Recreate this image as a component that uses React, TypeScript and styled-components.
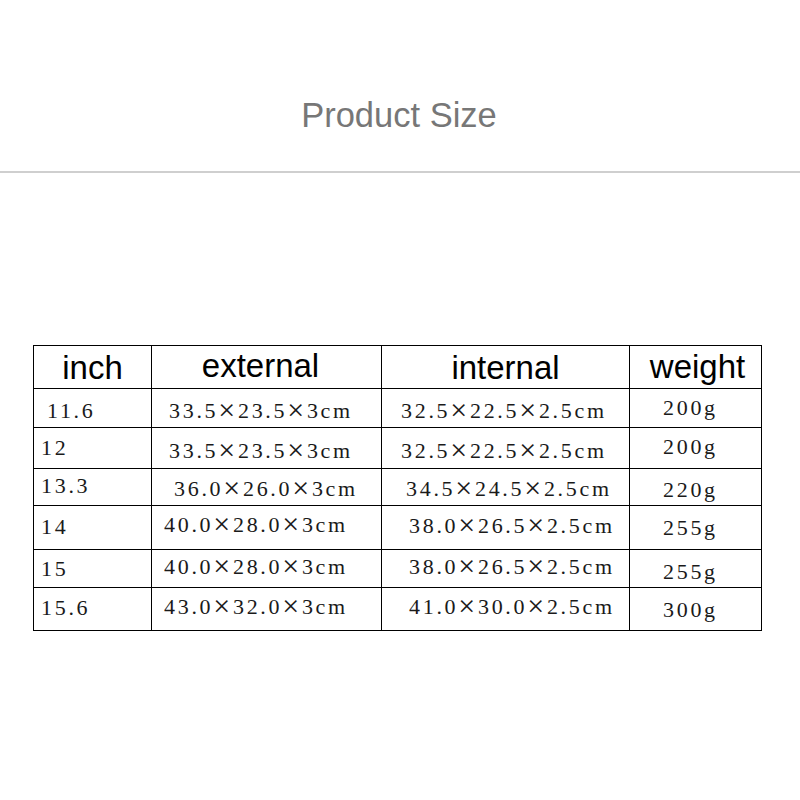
import { Fragment } from 'react';
import styled, { createGlobalStyle } from 'styled-components';

const GlobalStyle = createGlobalStyle`
    html, body {
        margin: 0;
        padding: 0;
        background: #ffffff;
    }
`;

interface ICell {
    text: string;
    indent: number;
    dy?: number;
}

interface IRow {
    height: number;
    cells: ICell[];
}

const columns = [118, 230, 248, 132];

const headers: ICell[] = [
    { text: 'inch', indent: 0, dy: 0 },
    { text: 'external', indent: -6, dy: -2 },
    { text: 'internal', indent: 0, dy: 0 },
    { text: 'weight', indent: 2, dy: -1 },
];

const rows: IRow[] = [
    {
        height: 39,
        cells: [
            { text: '11.6', indent: 13, dy: 3 },
            { text: '33.5×23.5×3cm', indent: 17, dy: 3 },
            { text: '32.5×22.5×2.5cm', indent: 19, dy: 3 },
            { text: '200g', indent: 33, dy: 0 },
        ],
    },
    {
        height: 41,
        cells: [
            { text: '12', indent: 7, dy: 0 },
            { text: '33.5×23.5×3cm', indent: 17, dy: 3 },
            { text: '32.5×22.5×2.5cm', indent: 19, dy: 3 },
            { text: '200g', indent: 33, dy: -1 },
        ],
    },
    {
        height: 37,
        cells: [
            { text: '13.3', indent: 7, dy: -1 },
            { text: '36.0×26.0×3cm', indent: 22, dy: 2 },
            { text: '34.5×24.5×2.5cm', indent: 24, dy: 2 },
            { text: '220g', indent: 33, dy: 3 },
        ],
    },
    {
        height: 44,
        cells: [
            { text: '14', indent: 7, dy: -1 },
            { text: '40.0×28.0×3cm', indent: 12, dy: -3 },
            { text: '38.0×26.5×2.5cm', indent: 27, dy: -2 },
            { text: '255g', indent: 33, dy: 0 },
        ],
    },
    {
        height: 38,
        cells: [
            { text: '15', indent: 7, dy: 0 },
            { text: '40.0×28.0×3cm', indent: 12, dy: -2 },
            { text: '38.0×26.5×2.5cm', indent: 27, dy: -2 },
            { text: '255g', indent: 33, dy: 3 },
        ],
    },
    {
        height: 43,
        cells: [
            { text: '15.6', indent: 7, dy: -1 },
            { text: '43.0×32.0×3cm', indent: 12, dy: -2 },
            { text: '41.0×30.0×2.5cm', indent: 27, dy: -2 },
            { text: '300g', indent: 33, dy: 1 },
        ],
    },
];

// the source renders × as a full-width glyph, so draw it larger than the digits
const renderValue = (text: string) =>
    text.split('×').map((part, i) => (
        <Fragment key={i}>
            {i > 0 && <Cross>×</Cross>}
            {part}
        </Fragment>
    ));

export default function App() {
    return (
        <Page>
            <GlobalStyle />
            <TitleBar>
                <Title>Product Size</Title>
            </TitleBar>
            <Divider />
            <TableWrap>
                <SizeTable>
                    <colgroup>
                        {columns.map((w, i) => (
                            <col key={i} style={{ width: w }} />
                        ))}
                    </colgroup>
                    <thead>
                        <Row $height={43}>
                            {headers.map((h) => (
                                <HeadCell key={h.text}>
                                    <Label $dx={h.indent} $dy={h.dy ?? 0}>
                                        {h.text}
                                    </Label>
                                </HeadCell>
                            ))}
                        </Row>
                    </thead>
                    <tbody>
                        {rows.map((row, r) => (
                            <Row key={r} $height={row.height}>
                                {row.cells.map((c, i) => (
                                    <DataCell key={i}>
                                        <Value $dx={c.indent} $dy={c.dy ?? 0}>
                                            {renderValue(c.text)}
                                        </Value>
                                    </DataCell>
                                ))}
                            </Row>
                        ))}
                    </tbody>
                </SizeTable>
            </TableWrap>
        </Page>
    );
}

const Page = styled.div`
    width: 800px;
    height: 800px;
    background: #ffffff;
    display: flex;
    flex-direction: column;
    overflow: hidden;
`;

const TitleBar = styled.div`
    height: 171px;
    display: flex;
    justify-content: center;
    padding-top: 96px;
    box-sizing: border-box;
`;

const Title = styled.h1`
    margin: 0;
    font-family: 'Liberation Sans', Arial, sans-serif;
    font-weight: normal;
    font-size: 34.5px;
    line-height: 39px;
    color: #777777;
    transform: translateX(-1px);
`;

const Divider = styled.div`
    height: 2px;
    background: #cfcfcf;
`;

const TableWrap = styled.div`
    padding: 172px 0 0 33px;
`;

const SizeTable = styled.table`
    border-collapse: collapse;
    table-layout: fixed;
    width: 729px;
`;

const Row = styled.tr<{ $height: number }>`
    height: ${(p) => p.$height}px;
`;

const HeadCell = styled.th`
    border: 1px solid #000000;
    padding: 0;
    text-align: center;
    vertical-align: middle;
    font-family: 'Liberation Sans', Arial, sans-serif;
    font-weight: normal;
    font-size: 33px;
    color: #000000;
    line-height: 1;
`;

const DataCell = styled.td`
    border: 1px solid #000000;
    padding: 0;
    text-align: left;
    vertical-align: middle;
    white-space: nowrap;
`;

const Label = styled.span<{ $dx: number; $dy: number }>`
    display: inline-block;
    transform: translate(${(p) => p.$dx}px, ${(p) => p.$dy}px);
`;

const Value = styled.span<{ $dx: number; $dy: number }>`
    display: inline-block;
    padding-left: ${(p) => p.$dx}px;
    transform: translateY(${(p) => p.$dy}px);
    font-family: 'Liberation Serif', 'Times New Roman', serif;
    font-size: 22px;
    line-height: 1;
    letter-spacing: 2.7px;
    color: #1a1a1a;
`;

const Cross = styled.span`
    font-size: 30px;
    line-height: 0;
    vertical-align: -2px;
`;
